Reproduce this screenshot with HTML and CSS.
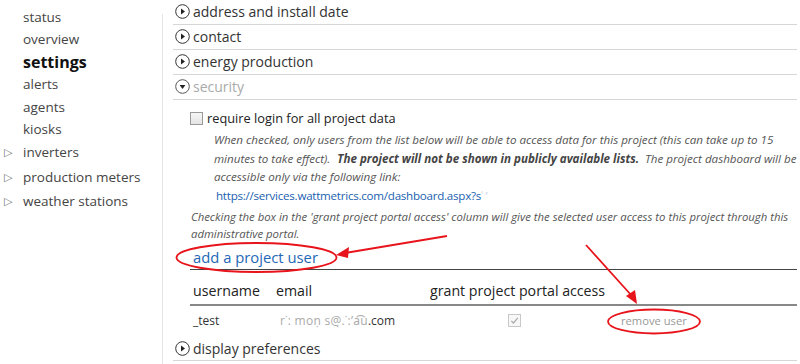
FILE: index.html
```html
<!DOCTYPE html>
<html>
<head>
<meta charset="utf-8">
<link rel="stylesheet" href="styles.css">
</head>
<body>
<div class="page">
  <nav class="side">
    <div class="nav-item">status</div>
    <div class="nav-item">overview</div>
    <div class="nav-item current">settings</div>
    <div class="nav-item">alerts</div>
    <div class="nav-item">agents</div>
    <div class="nav-item">kiosks</div>
    <div class="nav-item exp"><span class="tri">&#9655;</span>inverters</div>
    <div class="nav-item exp"><span class="tri">&#9655;</span>production meters</div>
    <div class="nav-item exp"><span class="tri">&#9655;</span>weather stations</div>
  </nav>
  <main class="main">
    <div class="sec"><span class="ico"><svg width="15" height="15" viewBox="0 0 15 15"><circle cx="7.5" cy="7.5" r="6.8" fill="none" stroke="#333" stroke-width="1"/><path d="M6 4.6 L10 7.5 L6 10.4 Z" fill="#222"/></svg></span>address and install date</div>
    <div class="sec"><span class="ico"><svg width="15" height="15" viewBox="0 0 15 15"><circle cx="7.5" cy="7.5" r="6.8" fill="none" stroke="#333" stroke-width="1"/><path d="M6 4.6 L10 7.5 L6 10.4 Z" fill="#222"/></svg></span>contact</div>
    <div class="sec"><span class="ico"><svg width="15" height="15" viewBox="0 0 15 15"><circle cx="7.5" cy="7.5" r="6.8" fill="none" stroke="#333" stroke-width="1"/><path d="M6 4.6 L10 7.5 L6 10.4 Z" fill="#222"/></svg></span>energy production</div>
    <div class="sec open"><span class="ico"><svg width="15" height="15" viewBox="0 0 15 15"><circle cx="7.5" cy="7.5" r="6.8" fill="none" stroke="#555" stroke-width="1"/><path d="M4.6 6 L10.4 6 L7.5 10 Z" fill="#222"/></svg></span>security</div>
    <div class="sec-body">
      <label class="req"><span class="cb"></span>require login for all project data</label>
      <div class="desc">
        <p>When checked, only users from the list below will be able to access data for this project (this can take up to 15 minutes to take effect).&nbsp; <b>The project will not be shown in publicly available lists.</b>&nbsp; The project dashboard will be accessible only via the following link:</p>
        <a class="link">https://services.wattmetrics.com/dashboard.aspx?s<span class="blur">&#703; &#8217;</span></a>
      </div>
      <p class="note">Checking the box in the 'grant project portal access' column will give the selected user access to this project through this administrative portal.</p>
      <div class="add">add a project user</div>
      <div class="thead">
        <span class="c1">username</span><span class="c2">email</span><span class="c3">grant project portal access</span>
      </div>
      <div class="trow">
        <span class="c1">_test</span><span class="c2 em"><span class="blur2">r&#729;:&nbsp;mon&#803;&nbsp;s@&#803;.&#729;:&#8217;a&#865;u</span>.com</span><span class="chk"><span class="cb2"><svg width="11" height="11" viewBox="0 0 11 11"><path d="M2.3 5.8 L4.5 8 L8.8 2.8" fill="none" stroke="#aaa" stroke-width="1.2"/></svg></span></span><span class="rm">remove user</span>
      </div>
    </div>
    <div class="sec last"><span class="ico"><svg width="15" height="15" viewBox="0 0 15 15"><circle cx="7.5" cy="7.5" r="6.8" fill="none" stroke="#333" stroke-width="1"/><path d="M6 4.6 L10 7.5 L6 10.4 Z" fill="#222"/></svg></span>display preferences</div>
  </main>
  <svg class="marks" width="800" height="364" viewBox="0 0 800 364">
    <ellipse cx="256.5" cy="257.5" rx="80" ry="14.5" fill="none" stroke="#e8141b" stroke-width="1.8"/>
    <line x1="447" y1="236" x2="345" y2="253" stroke="#e8141b" stroke-width="1.8"/>
    <path d="M336 255 L349 247 L348 258 Z" fill="#e8141b"/>
    <ellipse cx="654" cy="321.5" rx="46" ry="12" fill="none" stroke="#e8141b" stroke-width="1.8"/>
    <line x1="586" y1="245" x2="632" y2="296" stroke="#e8141b" stroke-width="1.8"/>
    <path d="M637 304 L626 296 L635 290 Z" fill="#e8141b"/>
  </svg>
</div>
</body>
</html>
```
FILE: styles.css
```css
* { box-sizing: border-box; }
html, body { margin: 0; padding: 0; background: #fff; }
body {
  font-family: "Open Sans", "Noto Sans", sans-serif;
  color: #333;
  width: 800px;
  height: 364px;
  overflow: hidden;
}
.page {
  position: relative;
  display: flex;
  height: 364px;
}
.side {
  width: 163px;
  flex: none;
  margin-top: 14px;
  border-right: 1px solid #e3e3e3;
  font-size: 13.5px;
  color: #444;
}
.nav-item {
  line-height: 22.4px;
  padding-left: 23px;
}
.nav-item:first-child { margin-top: -8px; }
.nav-item.current {
  font-weight: 700;
  font-size: 16px;
  color: #111;
}
.nav-item.exp {
  line-height: 24.5px;
  position: relative;
}
.tri {
  position: absolute;
  left: 4px;
  font-size: 11px;
  color: #777;
}
.main {
  flex: 1;
  margin-left: 10px;
  margin-right: 3px;
  font-size: 14px;
}
.sec {
  height: 25px;
  border-bottom: 1px solid #d6d6d6;
  display: flex;
  align-items: center;
  color: #333;
  padding-left: 2px;
  padding-bottom: 1px;
}
.sec.open { color: #aaa; }
.ico {
  width: 15px;
  height: 15px;
  margin-right: 3px;
  display: flex;
}
.sec-body {
  padding-left: 17px;
  padding-top: 11px;
}
.req {
  display: flex;
  align-items: center;
  font-size: 12.8px;
  color: #222;
  height: 15px;
  line-height: 15px;
}
.cb {
  width: 13px;
  height: 13px;
  border: 1px solid #9a9a9a;
  background: linear-gradient(#f6f6f6, #e4e4e4);
  margin-right: 4px;
  flex: none;
}
.desc {
  padding-left: 24px;
  margin-top: 5px;
  font-size: 11.6px;
  font-style: italic;
  color: #555;
  line-height: 18.5px;
}
.desc p { margin: 0; }
.desc b { color: #444; margin-left: 1px; }
.link {
  display: block;
  font-style: normal;
  color: #1a5fb0;
  padding-left: 2px;
  font-size: 11.6px;
  letter-spacing: -0.25px;
}
.blur { color: #c5d3e6; }
.note {
  margin: 3px 0 0 1px;
  font-size: 11.35px;
  font-style: italic;
  color: #555;
  line-height: 17px;
}
.add {
  margin-top: 4px;
  padding-left: 3px;
  font-size: 14.8px;
  color: #2467b5;
  line-height: 22px;
  padding-bottom: 1px;
  border-bottom: 1px solid #444;
}
.thead {
  display: flex;
  height: 36px;
  padding-top: 6px;
  align-items: center;
  border-bottom: 2px solid #888;
  font-size: 14.2px;
  color: #222;
}
.c1 { width: 86px; padding-left: 3px; flex: none; }
.c2 { width: 154px; flex: none; }
.c3 { flex: none; }
.trow {
  display: flex;
  height: 28px;
  align-items: center;
  font-size: 12px;
  color: #333;
}
.trow .c2 { width: 232px; padding-left: 4px; }
.blur2 { color: #aaa; letter-spacing: 0.3px; }
.chk { width: 113px; flex: none; }
.cb2 {
  width: 13px;
  height: 13px;
  border: 1px solid #c8c8c8;
  background: #f7f7f7;
  display: flex;
  align-items: center;
  justify-content: center;
}
.rm {
  color: #999;
  font-size: 11.2px;
}
.sec.last { margin-top: 3px; height: 24px; }
.marks {
  position: absolute;
  left: 0;
  top: 0;
  pointer-events: none;
}
```
